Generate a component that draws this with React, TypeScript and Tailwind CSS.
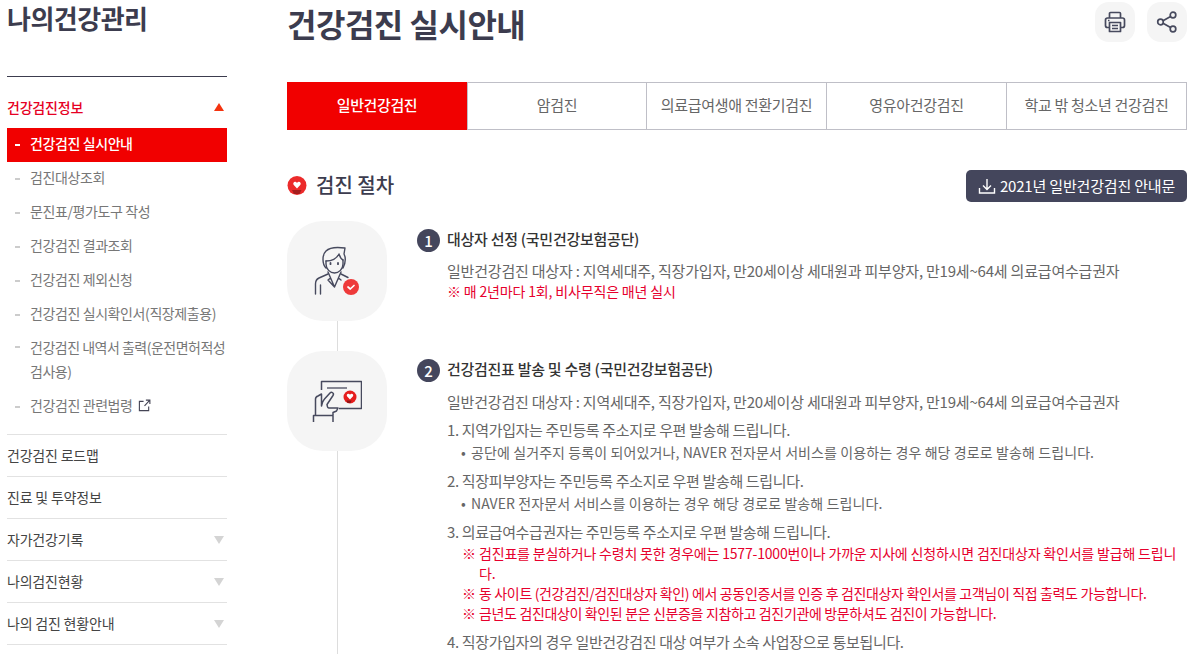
import { ReactNode } from "react"

const font = { fontFamily: '"Noto Sans CJK KR", "Noto Sans", sans-serif' }

const subMenu = [
  "검진대상조회",
  "문진표/평가도구 작성",
  "건강검진 결과조회",
  "건강검진 제외신청",
  "건강검진 실시확인서(직장제출용)",
]

const mainMenu = [
  { label: "건강검진 로드맵", arrow: false },
  { label: "진료 및 투약정보", arrow: false },
  { label: "자가건강기록", arrow: true },
  { label: "나의검진현황", arrow: true },
  { label: "나의 검진 현황안내", arrow: true },
]

const tabs = ["일반건강검진", "암검진", "의료급여생애 전환기검진", "영유아건강검진", "학교 밖 청소년 건강검진"]

function Dash({ active }: { active?: boolean }) {
  return <span className={`mr-[10px] h-[2px] w-[5px] shrink-0 ${active ? "bg-white" : "bg-[#cccccc]"}`} />
}

function SubItem({ children }: { children: ReactNode }) {
  return (
    <li className="flex h-[34px] items-center pl-[8px] text-[14px] tracking-[-0.4px] text-[#777777]">
      <Dash />
      <span className="flex items-center pb-[4px]">{children}</span>
    </li>
  )
}

function Sidebar() {
  return (
    <aside className="ml-[7px] w-[220px] shrink-0">
      <h2 className="h-[76px] text-[26px] leading-[36px] font-bold tracking-[-0.5px] text-[#3c3c4e]">나의건강관리</h2>
      <div className="h-px bg-[#3c3c4e]" />
      <div className="flex h-[51px] items-center justify-between pt-[9px] pr-[3px] text-[14px] font-medium tracking-[-0.2px] text-[#e60023]">
        <span>건강검진정보</span>
        <span className="h-0 w-0 border-x-[5.5px] border-b-[8px] border-x-transparent border-b-[#f4330f]" />
      </div>
      <ul>
        <li className="flex h-[34px] items-center bg-[#f10000] pl-[8px] text-[14px] font-medium tracking-[-0.4px] text-white">
          <Dash active />
          <span className="pb-[4px]">건강검진 실시안내</span>
        </li>
        {subMenu.map((item) => (
          <SubItem key={item}>{item}</SubItem>
        ))}
        <li className="flex pt-[3px] pb-[7px] pl-[8px] text-[14px] leading-[24px] tracking-[-0.5px] text-[#777777]">
          <span className="flex h-[24px] items-center">
            <Dash />
          </span>
          <span className="w-[197px] shrink-0">건강검진 내역서 출력(운전면허적성검사용)</span>
        </li>
        <SubItem>
          건강검진 관련법령
          <svg viewBox="0 0 14 14" className="ml-[5px] h-[13px] w-[13px]" fill="none" stroke="#444455" strokeWidth="1.2">
            <path d="M6 2.5H1.5v10h10V8M7 7.5 12.5 1.5M8.5 1.2h4.3v4.3" />
          </svg>
        </SubItem>
      </ul>
      <ul className="mt-[10px]">
        {mainMenu.map((item) => (
          <li
            key={item.label}
            className="flex h-[42px] items-center justify-between border-t border-[#e2e2e2] pr-[3px] text-[14px] tracking-[-0.2px] text-[#444444]"
          >
            {item.label}
            {item.arrow && <span className="h-0 w-0 border-x-[5.5px] border-t-[8px] border-x-transparent border-t-[#d4d4d4]" />}
          </li>
        ))}
        <li className="border-t border-[#e2e2e2]" />
      </ul>
    </aside>
  )
}

function HeartBadge({ className }: { className: string }) {
  return (
    <svg viewBox="0 0 20 20" className={className}>
      <circle cx="10" cy="9.5" r="9.5" fill="#ec2b2b" />
      <path d="M10 12.500 6.800 9.100C5.600 7.700 6.500 5.800 8.100 5.800c.8 0 1.400.4 1.900 1.100.5-.7 1.100-1.100 1.900-1.100 1.600 0 2.500 1.900 1.300 3.300Z" fill="#fff" />
      <path d="M5 14h9.500l-2 4H7Z" fill="#a51d1d" />
    </svg>
  )
}

function PersonIcon() {
  return (
    <svg viewBox="0 0 50 50" className="h-[50px] w-[50px]" fill="none" stroke="#474a5e" strokeWidth="1.400" strokeLinejoin="round" strokeLinecap="round">
      <path d="M14 22C10 18 10 9 14 5 18 1 26 1 33 2l-1 6c2 4 1 10-1 14" />
      <path d="M14 15c6 0 11-3 13-7 1 3 2 5 4 6" />
      <path d="M14 15v3c0 5 4 9 8.500 9s8.500-4 8.500-9v-4" />
      <path d="M18.500 17v1.200M26 17v1.200" strokeWidth="1.800" />
      <path d="M16 26l6.500 15L29 26M18.500 32l-2.500 2 6.500 7M26.500 32l2.500 2" />
      <path d="M16 28 7 32c-2.500 1.200-3.500 3-3.500 6v10M29 28l7 3.500M8.500 39v9" />
      <circle cx="39" cy="41" r="8" fill="#ee3a3a" stroke="none" />
      <path d="m36 41 2.300 2 3.700-3.500" stroke="#fff" strokeWidth="1.700" />
    </svg>
  )
}

function CardIcon() {
  return (
    <svg viewBox="0 0 50 44" className="h-[44px] w-[50px]" fill="none" stroke="#474a5e" strokeWidth="1.500" strokeLinejoin="round">
      <path d="M9.500 11V2.500h40v27H27" />
      <path d="M15 9h20" strokeWidth="1.300" />
      <path d="M3.500 36V20c0-1.500 1-2.500 2.500-3l3.500-2v12c.5-2 1-5 3-7l5.500-6c1.500-1.500 4.500 0 3 2.500L15 25.500c.2 2 1 3.500 2 3.500h9l-1.500 3-3.500 1.500V36" />
      <path d="M1.500 43V36.500h19.500V43" />
      <circle cx="38" cy="18" r="6.500" fill="#e61e1e" stroke="none" />
      <path d="M38 20.500 35.200 17.600c-1-1.200-.3-2.800 1.100-2.800.8 0 1.300.4 1.700 1 .4-.6.900-1 1.700-1 1.400 0 2.100 1.600 1.100 2.800Z" fill="#fff" stroke="none" />
      <path d="M34.500 21.500h5l-1 2.500h-3Z" fill="#8f1616" stroke="none" />
    </svg>
  )
}

function Step({ no, icon, title, className, children }: { no: number; icon: ReactNode; title: string; className: string; children: ReactNode }) {
  return (
    <div className="flex">
      <div className="mr-[30px] flex w-[100px] shrink-0 flex-col items-center">
        <div className="flex h-[100px] w-[100px] shrink-0 items-center justify-center rounded-[36px] bg-[#f5f5f5]">{icon}</div>
        <div className="w-px grow bg-[#dddddd]" />
      </div>
      <div className={`grow pt-[8px] ${className}`}>
        <div className="flex items-center text-[15px] leading-[20px] font-medium tracking-[-0.28px] text-[#333333]">
          <span className="mr-[7px] flex h-[23px] w-[23px] items-center justify-center rounded-full bg-[#44465c] tracking-normal text-white">{no}</span>
          <span className="pb-[3px]">{title}</span>
        </div>
        <div className="mt-[8px] ml-[30px] text-[15px] text-[#666666]">{children}</div>
      </div>
    </div>
  )
}

function Numbered({ children }: { children: ReactNode }) {
  return <p className="mt-[7px] leading-[22px] tracking-[-0.35px]">{children}</p>
}

function Bullet({ children }: { children: ReactNode }) {
  return (
    <p className="flex pl-[14px] text-[14px] leading-[22px] tracking-[0.1px]">
      <span className="w-[10px] shrink-0">•</span>
      {children}
    </p>
  )
}

function Note({ tight, children }: { tight?: boolean; children: ReactNode }) {
  return (
    <div className={`flex pl-[15px] text-[14px] leading-[20px] text-[#e6002d] ${tight ? "tracking-[-0.35px]" : "tracking-[-0.19px]"}`}>
      <span className="w-[17px] shrink-0">※</span>
      <span>{children}</span>
    </div>
  )
}

export default function App() {
  return (
    <div className="flex h-[654px] w-[1195px] overflow-hidden bg-white" style={font}>
      <Sidebar />
      <main className="ml-[60px] w-[900px] shrink-0">
        <div className="flex h-[82px] items-start justify-between">
          <h1 className="text-[32px] leading-[46px] font-bold tracking-[-0.5px] text-[#3c3c4e]">건강검진 실시안내</h1>
          <div className="mt-[2px] flex gap-[12px]">
            <button className="flex h-[40px] w-[40px] items-center justify-center rounded-[14px] bg-[#f5f5f5]">
              <svg viewBox="0 0 24 24" className="h-[24px] w-[24px]" fill="none" stroke="#474a5e" strokeWidth="1.700" strokeLinejoin="round">
                <path d="M6.500 8V3.500a1 1 0 0 1 1-1h9a1 1 0 0 1 1 1V8" />
                <path d="M6 17.500H4.500a2 2 0 0 1-2-2V10a2 2 0 0 1 2-2h15a2 2 0 0 1 2 2v5.500a2 2 0 0 1-2 2H18" />
                <path d="M6.500 12.500h11v9h-11zM9 15.500h6M9 18.500h6M5 10.500h1.500" />
              </svg>
            </button>
            <button className="flex h-[40px] w-[40px] items-center justify-center rounded-[14px] bg-[#f5f5f5]">
              <svg viewBox="0 0 24 24" className="h-[24px] w-[24px]" fill="none" stroke="#474a5e" strokeWidth="1.700">
                <circle cx="18" cy="5" r="2.800" />
                <circle cx="5.500" cy="12" r="2.800" />
                <circle cx="18" cy="19" r="2.800" />
                <path d="m8 10.700 7.600-4.300M8 13.300l7.600 4.300" />
              </svg>
            </button>
          </div>
        </div>

        <div className="flex h-[48px]">
          {tabs.map((tab, i) => (
            <div
              key={tab}
              className={
                i === 0
                  ? "flex w-[180px] shrink-0 items-center justify-center bg-[#f10000] pb-[1px] text-[15px] font-medium tracking-[-0.4px] text-white"
                  : i === 1
                    ? "flex w-[180px] shrink-0 items-center justify-center border border-[#bfbfc7] pb-[1px] text-[15px] tracking-[-0.3px] text-[#666666]"
                    : "-ml-px flex flex-1 items-center justify-center border border-[#bfbfc7] pb-[1px] text-[15px] tracking-[-0.3px] text-[#666666]"
              }
            >
              {tab}
            </div>
          ))}
        </div>

        <div className="mt-[40px] flex h-[32px] items-center justify-between">
          <h3 className="flex items-center text-[20px] font-medium text-[#3c3c4e]">
            <HeartBadge className="mr-[9px] h-[20px] w-[20px]" />
            <span className="pb-[2px]">검진 절차</span>
          </h3>
          <button className="flex h-[32px] w-[221px] items-center justify-center rounded-[5px] bg-[#44465c] text-[15px] tracking-[-0.18px] text-white">
            <svg viewBox="0 0 18 18" className="mr-[4px] h-[18px] w-[18px]" fill="none" stroke="#fff" strokeWidth="1.400">
              <path d="M9 2v10M5 8.500 9 12.500l4-4M1.500 11v5h15v-5" />
            </svg>
            2021년 일반건강검진 안내문
          </button>
        </div>

        <div className="mt-[19px]">
          <Step no={1} icon={<PersonIcon />} title="대상자 선정 (국민건강보험공단)" className="pb-[49px]">
            <p className="leading-[21px] tracking-[-0.2px]">일반건강검진 대상자 : 지역세대주, 직장가입자, 만20세이상 세대원과 피부양자, 만19세~64세 의료급여수급권자</p>
            <p className="text-[14px] leading-[21px] tracking-[-0.16px] text-[#e6002d]">※ 매 2년마다 1회, 비사무직은 매년 실시</p>
          </Step>
          <Step no={2} icon={<CardIcon />} title="건강검진표 발송 및 수령 (국민건강보험공단)" className="pb-[29px]">
            <p className="pt-[1px] leading-[21px] tracking-[-0.2px]">일반건강검진 대상자 : 지역세대주, 직장가입자, 만20세이상 세대원과 피부양자, 만19세~64세 의료급여수급권자</p>
            <Numbered>1. 지역가입자는 주민등록 주소지로 우편 발송해 드립니다.</Numbered>
            <Bullet>공단에 실거주지 등록이 되어있거나, NAVER 전자문서 서비스를 이용하는 경우 해당 경로로 발송해 드립니다.</Bullet>
            <Numbered>2. 직장피부양자는 주민등록 주소지로 우편 발송해 드립니다.</Numbered>
            <Bullet>NAVER 전자문서 서비스를 이용하는 경우 해당 경로로 발송해 드립니다.</Bullet>
            <Numbered>3. 의료급여수급권자는 주민등록 주소지로 우편 발송해 드립니다.</Numbered>
            <Note>검진표를 분실하거나 수령치 못한 경우에는 1577-1000번이나 가까운 지사에 신청하시면 검진대상자 확인서를 발급해 드립니다.</Note>
            <Note tight>동 사이트 (건강검진/검진대상자 확인) 에서 공동인증서를 인증 후 검진대상자 확인서를 고객님이 직접 출력도 가능합니다.</Note>
            <Note tight>금년도 검진대상이 확인된 분은 신분증을 지참하고 검진기관에 방문하셔도 검진이 가능합니다.</Note>
            <div className="mt-[8px]">
              <p className="leading-[22px] tracking-[-0.35px]">4. 직장가입자의 경우 일반건강검진 대상 여부가 소속 사업장으로 통보됩니다.</p>
            </div>
          </Step>
        </div>
      </main>
    </div>
  )
}
